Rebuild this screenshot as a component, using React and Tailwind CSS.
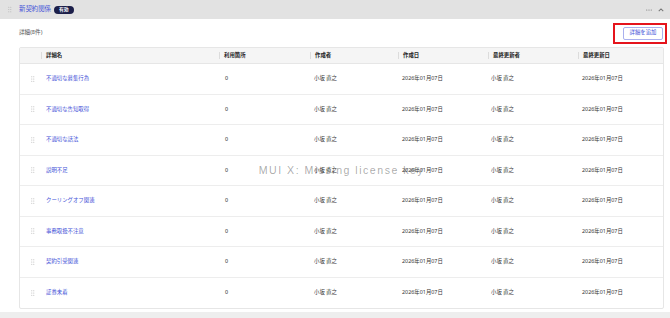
import React from 'react';

const rows = [
  '不適切な募集行為',
  '不適切な告知取得',
  '不適切な話法',
  '説明不足',
  'クーリングオフ関連',
  '事務取扱不注意',
  '契約引受関連',
  '証券未着',
];

const columns = [
  { label: '詳細名', width: 'w-[178px]' },
  { label: '利用箇所', width: 'w-[91px]' },
  { label: '作成者', width: 'w-[88px]' },
  { label: '作成日', width: 'w-[90px]' },
  { label: '最終更新者', width: 'w-[90px]' },
  { label: '最終更新日', width: 'flex-1' },
];

const DragDots = ({ className }) => (
  <svg viewBox="0 0 6 9" className={className} fill="currentColor">
    <circle cx="1.2" cy="1.2" r="0.8" />
    <circle cx="4.2" cy="1.2" r="0.8" />
    <circle cx="1.2" cy="4.5" r="0.8" />
    <circle cx="4.2" cy="4.5" r="0.8" />
    <circle cx="1.2" cy="7.8" r="0.8" />
    <circle cx="4.2" cy="7.8" r="0.8" />
  </svg>
);

export default function App() {
  return (
    <div className="w-[670px] h-[318px] bg-[#eeeeee] overflow-hidden font-['Noto_Sans','Noto_Sans_CJK_JP',sans-serif]">
      {/* ヘッダー */}
      <div className="h-[19px] bg-[#e2e2e2] flex items-center pl-[8px] pr-[6px]">
        <DragDots className="w-[4px] h-[7px] text-[#b5b5b5]" />
        <span className="ml-[7px] text-[6.4px] text-[#4553d8] leading-none">新契約関係</span>
        <span className="ml-[3px] h-[8px] px-[5px] rounded-full bg-[#1c1f4a] text-white text-[4.8px] font-bold flex items-center leading-none">
          有効
        </span>
        <div className="ml-auto flex items-center gap-[6px] text-[#777]">
          <svg viewBox="0 0 8 2" className="w-[6px] h-[2px]" fill="currentColor">
            <circle cx="1" cy="1" r="0.8" />
            <circle cx="4" cy="1" r="0.8" />
            <circle cx="7" cy="1" r="0.8" />
          </svg>
          <svg viewBox="0 0 8 5" className="w-[6px] h-[4px]" fill="none" stroke="currentColor" strokeWidth="1.4">
            <path d="M1 4L4 1L7 4" />
          </svg>
        </div>
      </div>

      {/* 本体 */}
      <div className="bg-white h-[293px] pl-[19px] pr-[6px]">
        <div className="h-[28px] flex items-center">
          <span className="text-[5.6px] text-[#555] leading-none">詳細(8件)</span>
          <div className="ml-auto relative mr-[1px]">
            <button className="h-[13px] w-[40px] border border-[#aab0ee] rounded-[2px] text-[5.4px] text-[#4553d8] leading-none flex items-center justify-center">
              詳細を追加
            </button>
            <div className="absolute left-[-10px] right-[-4px] top-[-4px] bottom-[-4px] border-2 border-[#e5141c]" />
          </div>
        </div>

        {/* テーブル */}
        <div className="relative border border-[#e6e6e6] rounded-[2px] w-[645px]">
          <div className="h-[16px] bg-[#f5f5f5] border-b border-[#e6e6e6] flex items-center">
            <div className="w-[21px]" />
            {columns.map((c) => (
              <div key={c.label} className={`${c.width} flex items-center h-full`}>
                <span className="w-px h-[7px] bg-[#dcdcdc]" />
                <span className="ml-[4px] text-[5.4px] font-semibold text-[#222] leading-none">{c.label}</span>
              </div>
            ))}
          </div>
          {rows.map((name, i) => (
            <div
              key={name}
              className={`h-[30.5px] flex items-center ${i < rows.length - 1 ? 'border-b border-[#ededed]' : ''}`}
            >
              <div className="w-[21px] flex justify-center pl-[4px]">
                <DragDots className="w-[4px] h-[6px] text-[#b8b8b8]" />
              </div>
              <div className="w-[178px] pl-[5px] text-[5.4px] text-[#4553d8] leading-none">{name}</div>
              <div className="w-[91px] pl-[6px] text-[5.4px] text-[#222] leading-none">0</div>
              <div className="w-[88px] pl-[4px] text-[5.4px] text-[#333] leading-none">小坂 直之</div>
              <div className="w-[90px] pl-[4px] text-[5.4px] text-[#333] leading-none">2026年01月07日</div>
              <div className="w-[90px] pl-[3px] text-[5.4px] text-[#333] leading-none">小坂 直之</div>
              <div className="flex-1 pl-[4px] text-[5.4px] text-[#333] leading-none">2026年01月07日</div>
            </div>
          ))}
          <div className="absolute left-0 right-0 top-[117px] flex justify-center pointer-events-none">
            <span className="text-[10.6px] tracking-[1.5px] text-black/35 leading-none font-['Liberation_Sans',sans-serif]">
              MUI X: Missing license key
            </span>
          </div>
        </div>
      </div>
    </div>
  );
}
